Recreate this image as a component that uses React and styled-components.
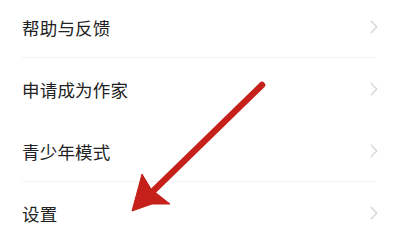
import React from 'react'
import styled, { createGlobalStyle } from 'styled-components'

const items = [
  { label: '帮助与反馈', divider: true },
  { label: '申请成为作家', divider: false },
  { label: '青少年模式', divider: true },
  { label: '设置', divider: false },
]

export default function App() {
  return (
    <Page>
      <GlobalStyle />
      <List>
        {items.map((item) => (
          <Row key={item.label} $divider={item.divider}>
            <Label>{item.label}</Label>
            <Chevron viewBox="0 0 8 14" aria-hidden="true">
              <path d="M1.2 1.2 L6.8 7 L1.2 12.8" />
            </Chevron>
          </Row>
        ))}
      </List>

      {/* Red annotation arrow drawn over the list */}
      <Arrow viewBox="0 0 400 227" aria-hidden="true">
        <line x1="262" y1="85" x2="147" y2="197" />
        <path d="M132 211 L142 174 L151 189 L170 204 L152 204 Z" />
      </Arrow>
    </Page>
  )
}

// ==================== STYLED COMPONENTS ====================
const GlobalStyle = createGlobalStyle`
  html, body {
    margin: 0;
    padding: 0;
    background: #ffffff;
  }
  body {
    font-family: "Noto Sans CJK SC", "Noto Sans", sans-serif;
  }
`
const Page = styled.div`
  position: relative;
  width: 400px;
  height: 227px;
  overflow: hidden;
  background: #ffffff;
`
const List = styled.div`
  display: flex;
  flex-direction: column;
  margin-top: -4px;
`
const Row = styled.div`
  height: 62px;
  display: flex;
  align-items: center;
  justify-content: space-between;
  padding: 0 22px;
  position: relative;
  box-sizing: border-box;

  &::after {
    content: '';
    display: ${({ $divider }) => ($divider ? 'block' : 'none')};
    position: absolute;
    bottom: 0;
    left: 22px;
    right: 24px;
    height: 1px;
    background: #f2f2f2;
  }
`
const Label = styled.span`
  font-size: 17.5px;
  color: #222222;
  letter-spacing: 0.2px;
`
const Chevron = styled.svg`
  width: 8px;
  height: 14px;
  fill: none;
  stroke: #d6d6d6;
  stroke-width: 1.3;
  stroke-linecap: round;
  stroke-linejoin: round;
`
const Arrow = styled.svg`
  position: absolute;
  left: 0;
  top: 0;
  width: 400px;
  height: 227px;
  pointer-events: none;

  line {
    stroke: #c5201a;
    stroke-width: 6.5;
    stroke-linecap: round;
  }
  path {
    fill: #c5201a;
    stroke: #c5201a;
    stroke-width: 1;
    stroke-linejoin: round;
  }
`
